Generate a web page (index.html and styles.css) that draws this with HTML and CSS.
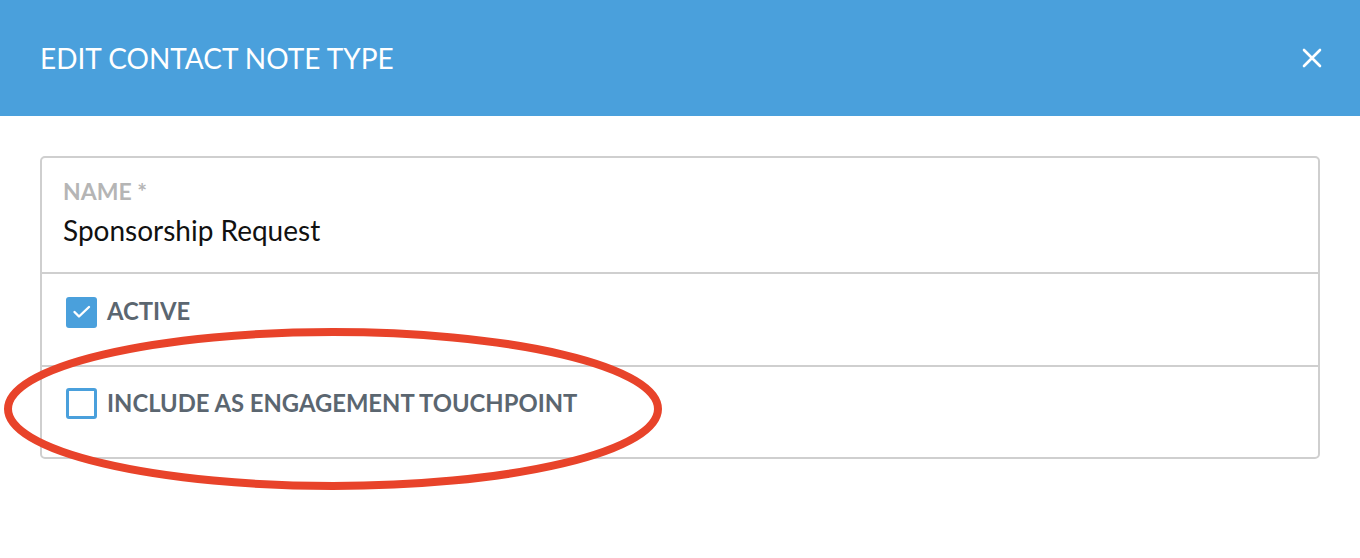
FILE: index.html
```html
<!DOCTYPE html>
<html>
<head>
<meta charset="utf-8">
<link rel="stylesheet" href="styles.css">
</head>
<body>
<div class="modal">
  <header class="header">
    <h1 class="title">EDIT CONTACT NOTE TYPE</h1>
    <svg class="close" width="20" height="20" viewBox="0 0 20 20"><path d="M2 2 L18 18 M18 2 L2 18" stroke="#fff" stroke-width="2.6" stroke-linecap="round"/></svg>
  </header>
  <main class="body">
    <div class="card">
      <div class="row row-name">
        <div class="label">NAME *</div>
        <div class="value">Sponsorship Request</div>
      </div>
      <div class="row row-check row-active">
        <span class="box checked"><svg width="31" height="31" viewBox="0 0 31 31"><path d="M8.5 15 L13 19.5 L23 10" fill="none" stroke="#fff" stroke-width="2.4" stroke-linecap="round" stroke-linejoin="round"/></svg></span>
        <span class="check-label">ACTIVE</span>
      </div>
      <div class="row row-check row-touch">
        <span class="box"></span>
        <span class="check-label">INCLUDE AS ENGAGEMENT TOUCHPOINT</span>
      </div>
    </div>
    <svg class="circle" width="680" height="180" viewBox="0 0 680 180"><ellipse cx="333" cy="90" rx="325" ry="77" fill="none" stroke="#e8432a" stroke-width="8"/></svg>
  </main>
</div>
</body>
</html>
```
FILE: styles.css
```css
html, body {
  margin: 0;
  padding: 0;
  background: #fff;
  font-family: Lato, "Open Sans", sans-serif;
}
.modal {
  width: 1360px;
  height: 558px;
  overflow: hidden;
}
.header {
  height: 116px;
  background: #4aa0dc;
  display: flex;
  align-items: center;
  justify-content: space-between;
  padding: 0 38px 0 40px;
  box-sizing: border-box;
}
.title {
  margin: 0;
  color: #fff;
  font-weight: 400;
  font-size: 28px;
  letter-spacing: 0;
}
.close {
  display: block;
}
.body {
  position: relative;
  padding: 40px 40px 0 40px;
}
.card {
  width: 1280px;
  box-sizing: border-box;
  border: 2px solid #cfcfcf;
  border-radius: 5px;
}
.row {
  box-sizing: border-box;
  border-top: 2px solid #cfcfcf;
  padding-left: 24px;
}
.row:first-child {
  border-top: none;
}
.row-name {
  height: 114px;
  padding-top: 19px;
  padding-left: 21px;
}
.label {
  color: #b5b5b5;
  font-weight: 700;
  font-size: 23px;
  line-height: 28px;
}
.value {
  color: #111;
  font-size: 28px;
  line-height: 34px;
  margin-top: 8px;
}
.row-check {
  display: flex;
  align-items: center;
  gap: 10px;
}
.row-active {
  height: 93px;
  padding-bottom: 15px;
}
.row-active .check-label {
  margin-bottom: 3px;
}
.row-touch {
  height: 92px;
  padding-bottom: 18px;
}
.box {
  width: 31px;
  height: 31px;
  box-sizing: border-box;
  border: 3px solid #4aa0dc;
  border-radius: 3px;
  display: flex;
  align-items: center;
  justify-content: center;
  background: #fff;
  flex: none;
}
.box.checked {
  background: #4aa0dc;
  border: none;
}
.box svg {
  display: block;
}
.check-label {
  color: #5b6670;
  font-weight: 700;
  font-size: 23.8px;
}
.circle {
  position: absolute;
  left: 0;
  top: 203px;
}
```
